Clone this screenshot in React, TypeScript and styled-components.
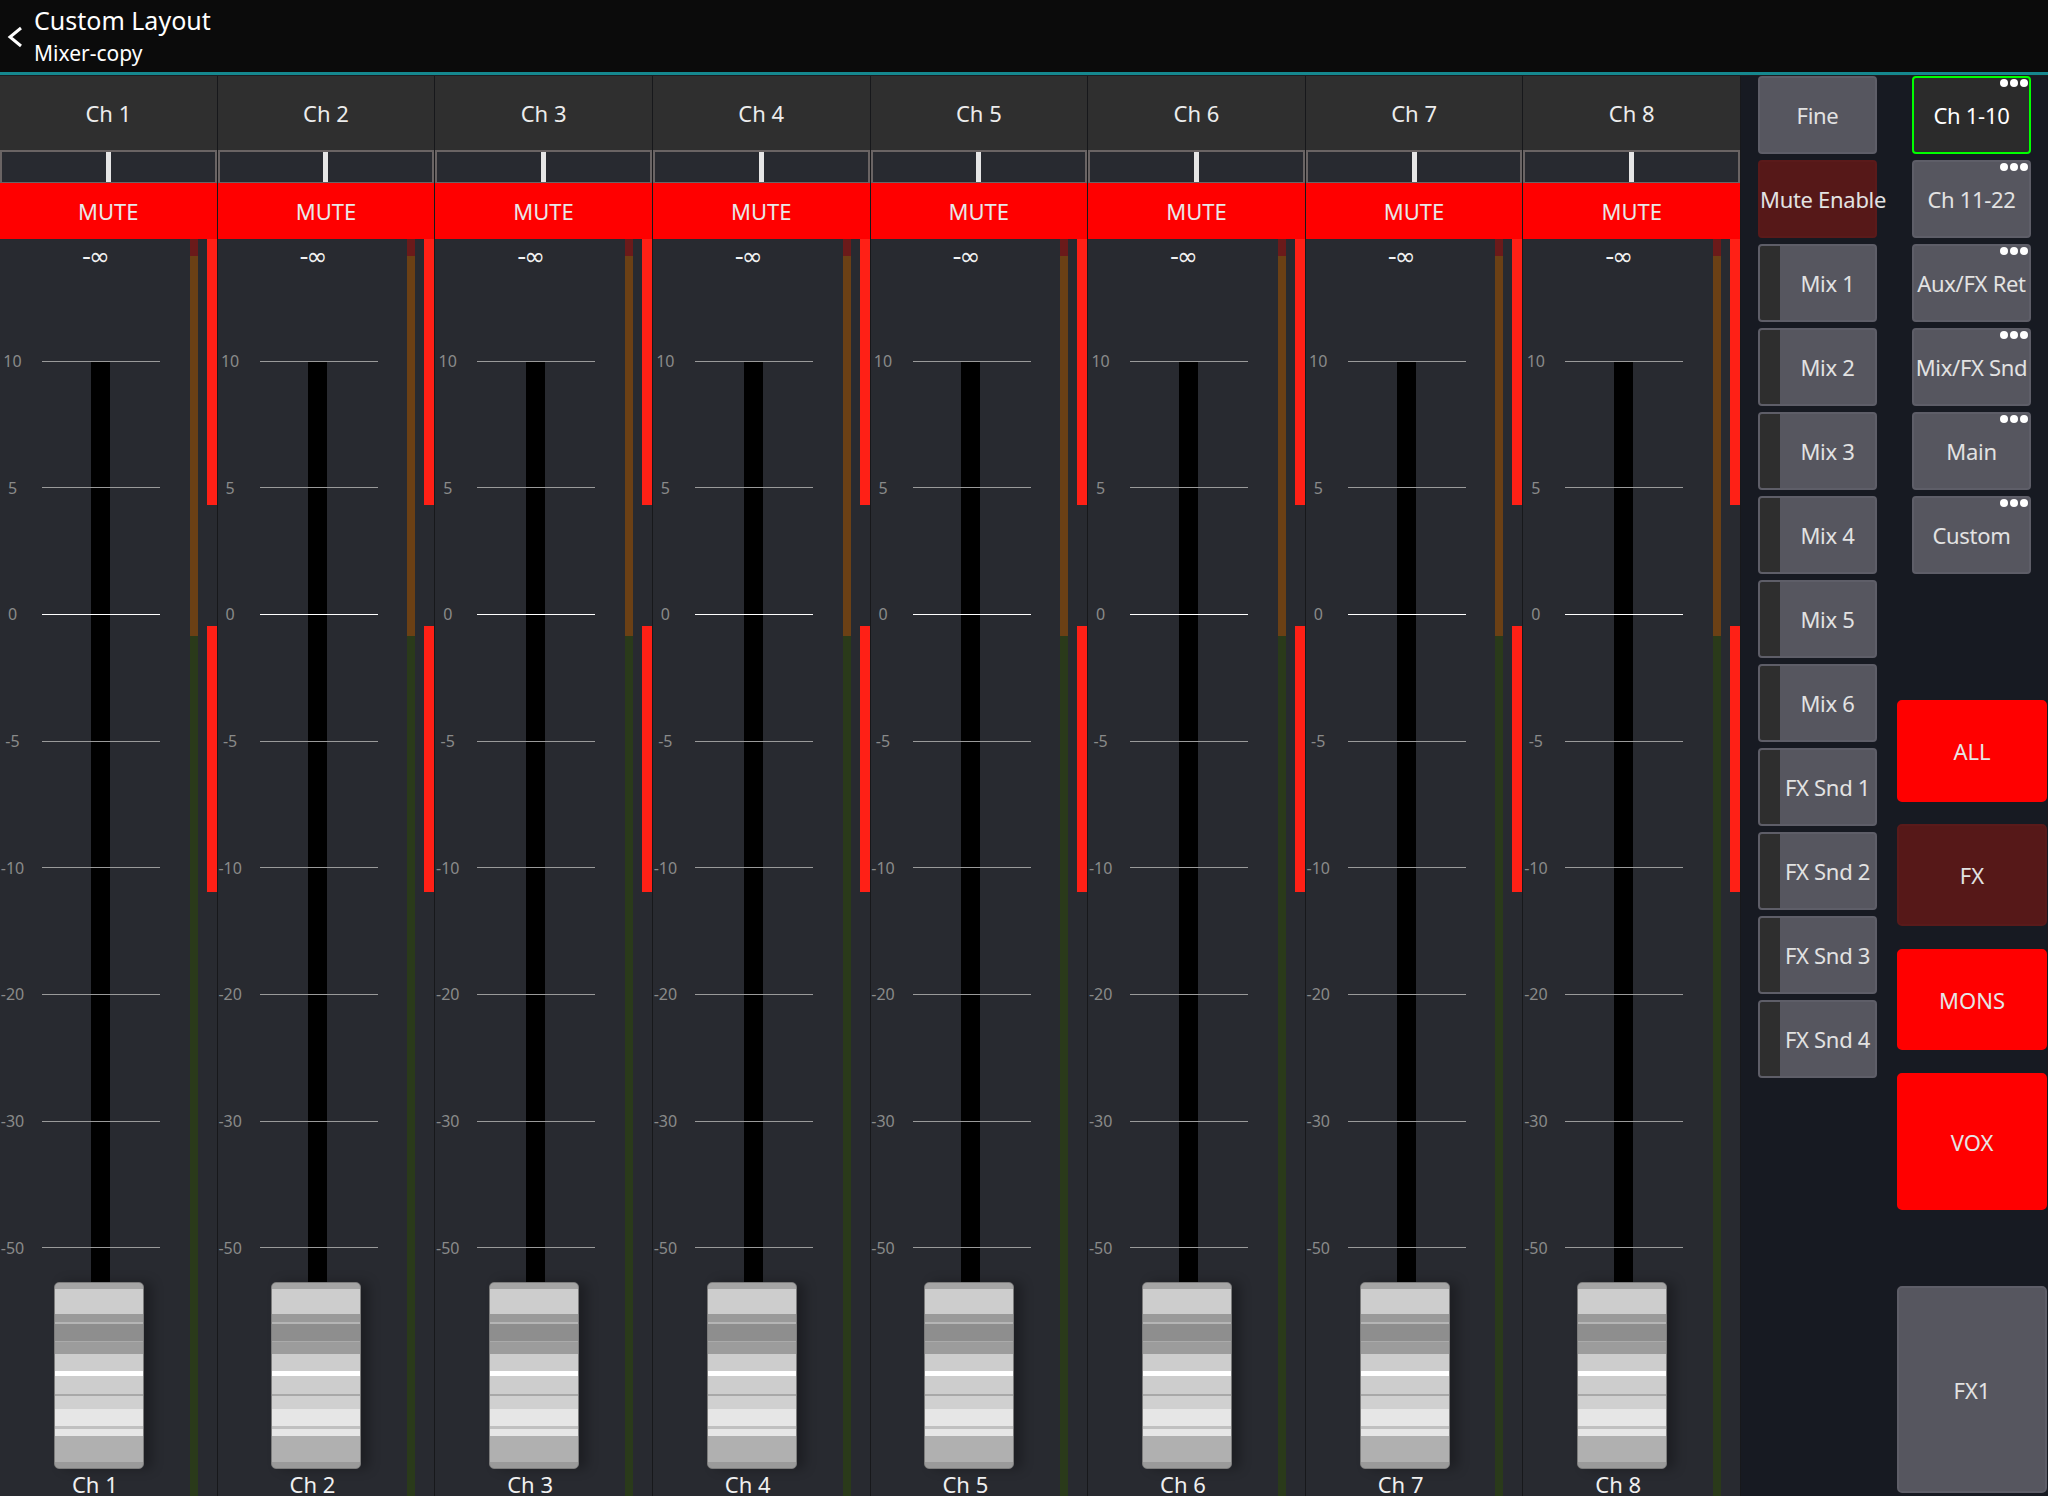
import React from 'react';
import styled, { createGlobalStyle, css } from 'styled-components';

const GlobalStyle = createGlobalStyle`
  html, body {
    margin: 0;
    padding: 0;
    background: #171a22;
  }
  body {
    font-family: 'Noto Sans', 'Open Sans', sans-serif;
    color: #e4e4e4;
  }
  * {
    box-sizing: border-box;
  }
`;

const Screen = styled.div`
  width: 2048px;
  height: 1496px;
  overflow: hidden;
  display: flex;
  flex-direction: column;
  background: #171a22;
`;

const TopBar = styled.header`
  height: 72px;
  flex: none;
  background: #0b0b0b;
  display: flex;
  align-items: flex-start;
`;

const BackButton = styled.button`
  background: none;
  border: none;
  padding: 0;
  margin: 25px 0 0 7px;
  width: 17px;
  height: 24px;
  display: flex;
  cursor: pointer;
`;

const TitleBlock = styled.div`
  margin-left: 10px;
  padding-top: 5px;
  display: flex;
  flex-direction: column;
  color: #ffffff;
`;

const Title = styled.div`
  font-size: 25px;
  line-height: 30px;
`;

const Subtitle = styled.div`
  margin-top: 5px;
  font-size: 21px;
  line-height: 26px;
`;

const AccentRule = styled.div`
  height: 4px;
  flex: none;
  background: #1b1d22;
  border-top: 3px solid #15888f;
`;

const Workspace = styled.main`
  flex: 1;
  min-height: 0;
  display: flex;
`;

const MixerBank = styled.section`
  width: 1741px;
  flex: none;
  display: flex;
`;

const Strip = styled.div`
  flex: 1;
  min-width: 0;
  display: flex;
  flex-direction: column;
  border-right: 1px solid #17181b;
`;

const StripName = styled.div`
  height: 74px;
  flex: none;
  background: #2f2f2f;
  display: flex;
  align-items: center;
  justify-content: center;
  font-size: 22px;
  color: #ececec;
`;

const PanBar = styled.div`
  height: 33px;
  flex: none;
  background: #282a30;
  border: 2px solid #6a6464;
  border-bottom-width: 1px;
  display: flex;
  justify-content: center;
`;

const PanMarker = styled.div`
  width: 5px;
  background: #e6e6e6;
`;

const MuteButton = styled.button`
  height: 56px;
  flex: none;
  border: none;
  background: #ff0000;
  color: #e8e8e8;
  font-family: inherit;
  font-size: 22px;
  display: flex;
  align-items: center;
  justify-content: center;
  cursor: pointer;
`;

const StripBody = styled.div`
  flex: 1;
  min-height: 0;
  display: flex;
  background: #282a30;
`;

const FaderArea = styled.div`
  flex: 1;
  min-width: 0;
  display: grid;
`;

const TrackLayer = styled.div`
  grid-area: 1 / 1;
  display: flex;
  flex-direction: column;
  align-items: center;
  min-height: 0;
`;

const InfLabel = styled.div`
  height: 122px;
  flex: none;
  padding-top: 4px;
  font-family: 'DejaVu Sans', 'Noto Sans', sans-serif;
  font-size: 25px;
  line-height: 28px;
  letter-spacing: -2px;
  color: #f2f2f2;
`;

const Track = styled.div`
  flex: 1;
  width: 19px;
  margin-left: 11px;
  background: #000000;
`;

const FaderCap = styled.div`
  flex: none;
  width: 90px;
  height: 187px;
  margin-left: 8px;
  border: 1px solid #7c7c7c;
  border-radius: 5px;
  box-shadow: 8px 0 12px rgba(0, 0, 0, 0.28);
  background: linear-gradient(
    to bottom,
    #a5a5a5 0 6px,
    #cdcdcd 6px 31px,
    #9a9a9a 31px 39px,
    #b5b5b5 39px 41px,
    #8e8e8e 41px 58px,
    #aaaaaa 58px 59px,
    #9c9c9c 59px 71px,
    #cdcdcd 71px 88px,
    #ffffff 88px 93px,
    #cdcdcd 93px 111px,
    #a8a8a8 111px 113px,
    #d0d0d0 113px 126px,
    #e6e6e6 126px 143px,
    #c0c0c0 143px 146px,
    #e6e6e6 146px 153px,
    #b0b0b0 153px 179px,
    #9a9a9a 179px
  );
`;

const StripLabel = styled.div`
  flex: none;
  height: 25px;
  margin-top: 2px;
  font-size: 22px;
  line-height: 26px;
  color: #f0f0f0;
`;

const ScaleLayer = styled.div`
  grid-area: 1 / 1;
  display: flex;
  flex-direction: column;
  gap: 106.7px;
  padding-top: 112px;
  pointer-events: none;
`;

const Tick = styled.div`
  height: 20px;
  display: flex;
  align-items: center;
`;

const TickLabel = styled.span`
  width: 25px;
  text-align: center;
  font-size: 16px;
  line-height: 20px;
  color: #8a8a8a;
`;

const TickLine = styled.div<{ $bright?: boolean }>`
  width: 118px;
  height: 1px;
  margin-left: 17px;
  background: ${(p) => (p.$bright ? '#ffffff' : '#9a9a9a')};
`;

const MeterColumn = styled.div`
  width: 8px;
  flex: none;
  display: flex;
  flex-direction: column;
`;

const MeterSegment = styled.div<{ $color: string; $size?: number }>`
  background: ${(p) => p.$color};
  ${(p) =>
    p.$size
      ? css`
          height: ${p.$size}px;
          flex: none;
        `
      : css`
          flex: 1;
        `}
`;

const ReductionColumn = styled.div`
  width: 10px;
  flex: none;
  margin-left: 9px;
  display: flex;
  flex-direction: column;
`;

const ReductionSegment = styled.div<{ $lit?: boolean; $size: number }>`
  height: ${(p) => p.$size}px;
  flex: none;
  background: ${(p) => (p.$lit ? '#ff2016' : 'transparent')};
`;

const SidePanel = styled.aside`
  flex: 1;
  display: flex;
  padding-left: 17px;
  background: #171a22;
`;

const LeftColumn = styled.div`
  width: 119px;
  display: flex;
  flex-direction: column;
  gap: 6px;
`;

const RightColumn = styled.div`
  width: 150px;
  margin-left: 20px;
  display: flex;
  flex-direction: column;
`;

const BankGroup = styled.div`
  padding-left: 15px;
  width: 134px;
  display: flex;
  flex-direction: column;
  gap: 6px;
`;

type Tone = 'slate' | 'maroon' | 'active' | 'red';

const toneStyles: Record<Tone, ReturnType<typeof css>> = {
  slate: css`
    background: #56565f;
    border: 2px solid #5e5e68;
    color: #e2e2e2;
  `,
  maroon: css`
    background: #561818;
    border: 2px solid #5a1a1a;
    color: #e2e2e2;
  `,
  active: css`
    background: #2b2b2b;
    border: 2px solid #00ff00;
    color: #ffffff;
  `,
  red: css`
    background: #ff0000;
    border: 2px solid #ff0000;
    color: #e6e6e6;
  `,
};

const PanelButton = styled.button<{ $tone: Tone }>`
  position: relative;
  height: 78px;
  width: 119px;
  flex: none;
  padding: 0;
  border-radius: 4px;
  font-family: inherit;
  font-size: 22px;
  letter-spacing: -0.3px;
  white-space: nowrap;
  display: flex;
  align-items: stretch;
  cursor: pointer;
  ${(p) => toneStyles[p.$tone]}
`;

const ButtonText = styled.span`
  flex: 1;
  display: flex;
  align-items: center;
  justify-content: center;
`;

const TabStrip = styled.span`
  width: 20px;
  flex: none;
  background: #2e2e2e;
  border-radius: 2px 0 0 2px;
`;

const MoreDots = styled.span`
  position: absolute;
  top: 1px;
  right: 1px;
  display: flex;
  gap: 2px;
`;

const Dot = styled.span`
  width: 8px;
  height: 8px;
  border-radius: 50%;
  background: #ffffff;
`;

const BigButton = styled.button<{ $tone: Tone; $height: number; $gap: number }>`
  height: ${(p) => p.$height}px;
  margin-top: ${(p) => p.$gap}px;
  width: 150px;
  flex: none;
  padding: 0;
  border-radius: 5px;
  font-family: inherit;
  font-size: 22px;
  display: flex;
  align-items: center;
  justify-content: center;
  cursor: pointer;
  ${(p) => toneStyles[p.$tone]}
`;

const scale = [
  { label: '10' },
  { label: '5' },
  { label: '0', bright: true },
  { label: '-5' },
  { label: '-10' },
  { label: '-20' },
  { label: '-30' },
  { label: '-50' },
];

const channels = ['Ch 1', 'Ch 2', 'Ch 3', 'Ch 4', 'Ch 5', 'Ch 6', 'Ch 7', 'Ch 8'];

const leftButtons: { label: string; tone: Tone; tab?: boolean }[] = [
  { label: 'Fine', tone: 'slate' },
  { label: 'Mute Enable', tone: 'maroon' },
  { label: 'Mix 1', tone: 'slate', tab: true },
  { label: 'Mix 2', tone: 'slate', tab: true },
  { label: 'Mix 3', tone: 'slate', tab: true },
  { label: 'Mix 4', tone: 'slate', tab: true },
  { label: 'Mix 5', tone: 'slate', tab: true },
  { label: 'Mix 6', tone: 'slate', tab: true },
  { label: 'FX Snd 1', tone: 'slate', tab: true },
  { label: 'FX Snd 2', tone: 'slate', tab: true },
  { label: 'FX Snd 3', tone: 'slate', tab: true },
  { label: 'FX Snd 4', tone: 'slate', tab: true },
];

const banks: { label: string; tone: Tone }[] = [
  { label: 'Ch 1-10', tone: 'active' },
  { label: 'Ch 11-22', tone: 'slate' },
  { label: 'Aux/FX Ret', tone: 'slate' },
  { label: 'Mix/FX Snd', tone: 'slate' },
  { label: 'Main', tone: 'slate' },
  { label: 'Custom', tone: 'slate' },
];

const groups: { label: string; tone: Tone; height: number; gap: number }[] = [
  { label: 'ALL', tone: 'red', height: 102, gap: 126 },
  { label: 'FX', tone: 'maroon', height: 102, gap: 22 },
  { label: 'MONS', tone: 'red', height: 101, gap: 23 },
  { label: 'VOX', tone: 'red', height: 137, gap: 23 },
  { label: 'FX1', tone: 'slate', height: 207, gap: 76 },
];

const ChannelStrip = ({ name }: { name: string }) => (
  <Strip>
    <StripName>{name}</StripName>
    <PanBar>
      <PanMarker />
    </PanBar>
    <MuteButton>MUTE</MuteButton>
    <StripBody>
      <FaderArea>
        <TrackLayer>
          <InfLabel>-∞</InfLabel>
          <Track />
          <FaderCap />
          <StripLabel>{name}</StripLabel>
        </TrackLayer>
        <ScaleLayer>
          {scale.map((t) => (
            <Tick key={t.label}>
              <TickLabel>{t.label}</TickLabel>
              <TickLine $bright={t.bright} />
            </Tick>
          ))}
        </ScaleLayer>
      </FaderArea>
      <MeterColumn>
        <MeterSegment $color="#6b1a1a" $size={17} />
        <MeterSegment $color="#6b4015" $size={380} />
        <MeterSegment $color="#2a3a1a" />
      </MeterColumn>
      <ReductionColumn>
        <ReductionSegment $lit $size={266} />
        <ReductionSegment $size={121} />
        <ReductionSegment $lit $size={266} />
      </ReductionColumn>
    </StripBody>
  </Strip>
);

export default function App() {
  return (
    <>
      <GlobalStyle />
      <Screen>
        <TopBar>
          <BackButton aria-label="Back">
            <svg width="17" height="24" viewBox="0 0 17 24">
              <polyline points="14,3 3,12 14,21" fill="none" stroke="#ffffff" strokeWidth="3" />
            </svg>
          </BackButton>
          <TitleBlock>
            <Title>Custom Layout</Title>
            <Subtitle>Mixer-copy</Subtitle>
          </TitleBlock>
        </TopBar>
        <AccentRule />
        <Workspace>
          <MixerBank>
            {channels.map((c) => (
              <ChannelStrip key={c} name={c} />
            ))}
          </MixerBank>
          <SidePanel>
            <LeftColumn>
              {leftButtons.map((b) => (
                <PanelButton key={b.label} $tone={b.tone}>
                  {b.tab && <TabStrip />}
                  <ButtonText>{b.label}</ButtonText>
                </PanelButton>
              ))}
            </LeftColumn>
            <RightColumn>
              <BankGroup>
                {banks.map((b) => (
                  <PanelButton key={b.label} $tone={b.tone}>
                    <ButtonText>{b.label}</ButtonText>
                    <MoreDots>
                      <Dot />
                      <Dot />
                      <Dot />
                    </MoreDots>
                  </PanelButton>
                ))}
              </BankGroup>
              {groups.map((g) => (
                <BigButton key={g.label} $tone={g.tone} $height={g.height} $gap={g.gap}>
                  {g.label}
                </BigButton>
              ))}
            </RightColumn>
          </SidePanel>
        </Workspace>
      </Screen>
    </>
  );
}
